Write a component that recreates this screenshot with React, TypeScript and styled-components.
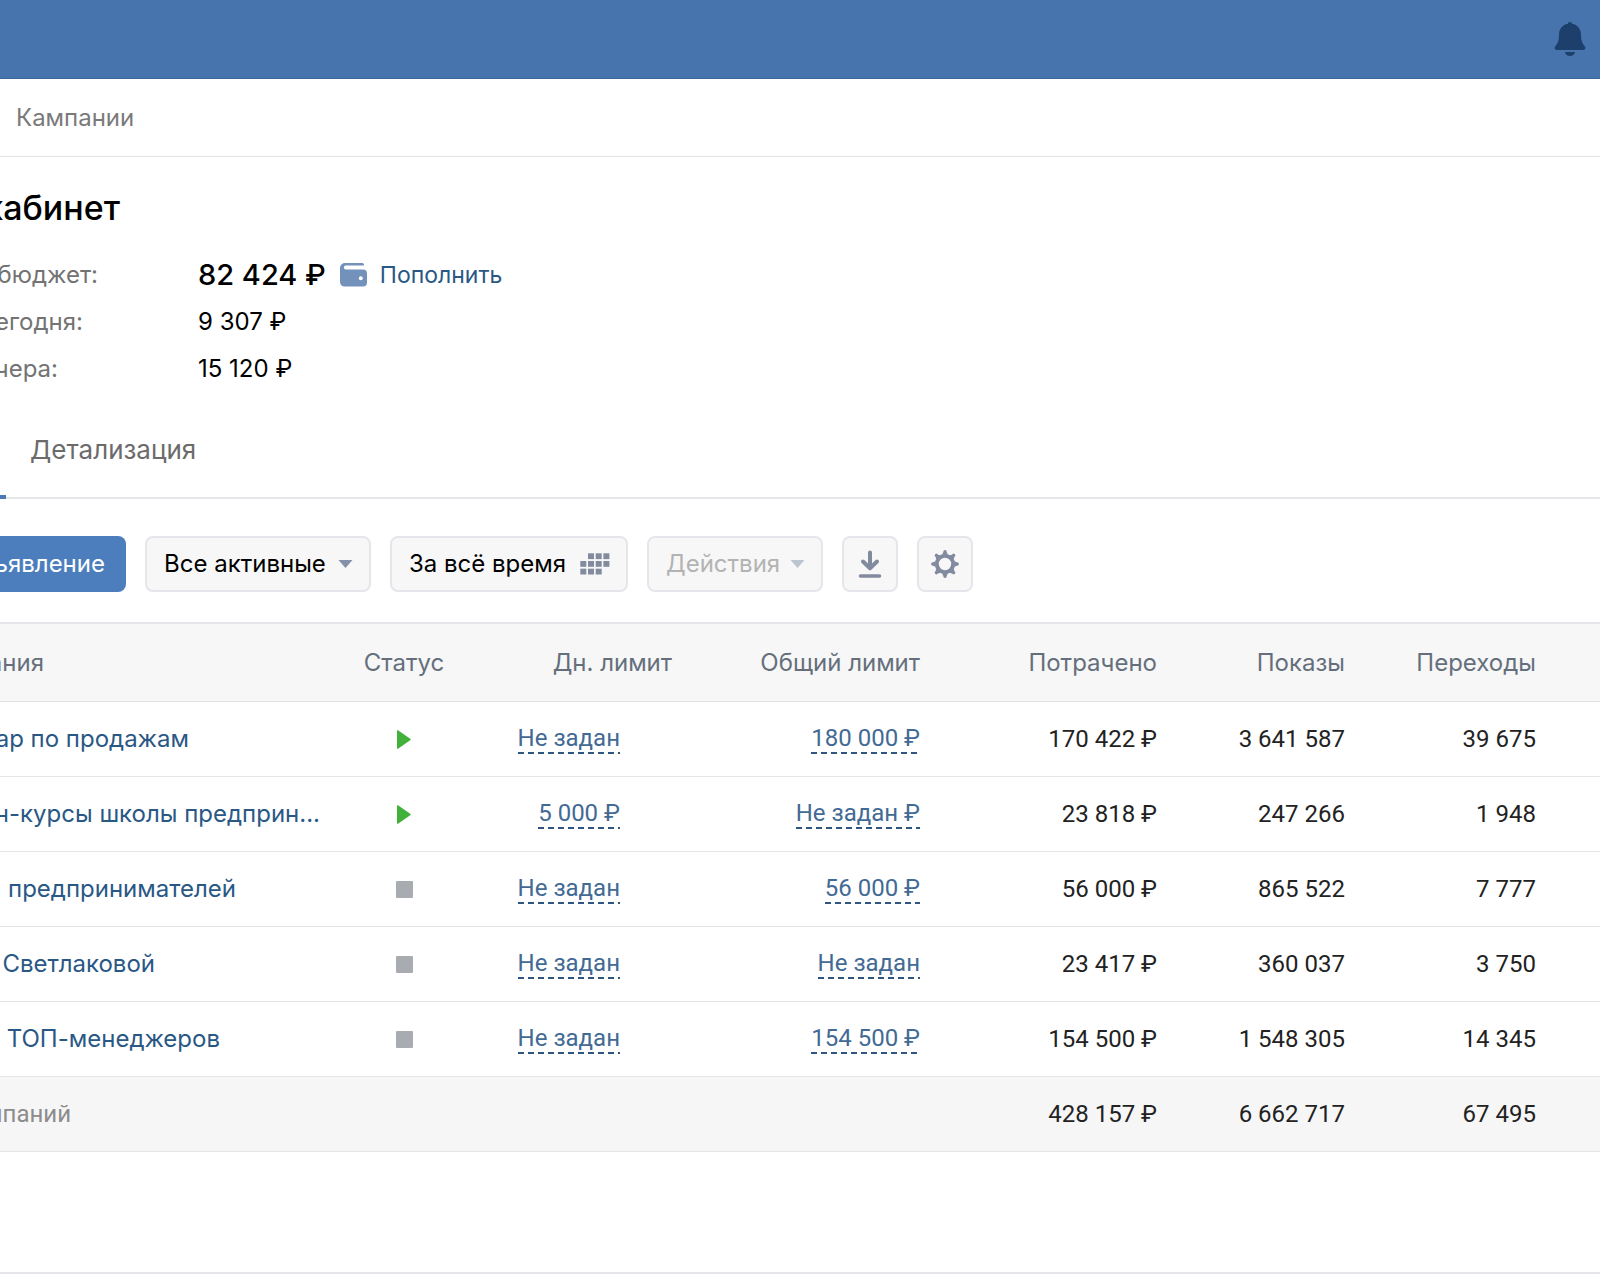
import React from "react";
import styled, { createGlobalStyle, css } from "styled-components";

const GlobalStyle = createGlobalStyle`
  *, *::before, *::after { box-sizing: border-box; }
  body {
    margin: 0;
    background: #fff;
    color: #000;
    font-family: Inter, "Liberation Sans", sans-serif;
    font-size: 24px;
    line-height: 28px;
    overflow-x: hidden;
  }
  button, select { font: inherit; }
`;

const Page = styled.div`
  display: flex;
  flex-direction: column;
  width: 100%;
  overflow: hidden;
`;

const TopBar = styled.header`
  display: flex;
  align-items: center;
  justify-content: flex-end;
  height: 79px;
  padding-right: 14px;
  background: #4774ad;
  border-bottom: 1px solid #3d679c;
`;

const BellButton = styled.button`
  display: flex;
  padding: 0;
  border: 0;
  background: none;
  color: #1d3f6c;
`;

const Nav = styled.nav`
  display: flex;
  align-items: center;
  height: 78px;
  padding-left: 16px;
  border-bottom: 1px solid #e1e2e5;
`;

const NavLink = styled.a`
  color: #7a7a7a;
  text-decoration: none;
`;

const Summary = styled.section`
  display: flex;
  flex-direction: column;
  padding-top: 30px;
`;

const Clipped = styled.span<{ $width: number }>`
  display: flex;
  justify-content: flex-end;
  width: ${(p) => p.$width}px;
  white-space: nowrap;
`;

const Title = styled.h1`
  margin: 0;
  font-size: 34px;
  line-height: 42px;
  font-weight: 500;
`;

const Facts = styled.dl`
  display: grid;
  grid-template-columns: 198px 1fr;
  grid-auto-rows: 47px;
  align-items: center;
  margin: 22px 0 0;
`;

const FactName = styled.dt`
  color: #737373;
`;

const FactValue = styled.dd`
  display: flex;
  align-items: center;
  gap: 14px;
  margin: 0;
`;

const Balance = styled.strong`
  font-size: 29px;
  font-weight: 500;
`;

const TopUp = styled.a`
  display: flex;
  align-items: center;
  gap: 13px;
  color: #2a5885;
  font-size: 23px;
  text-decoration: none;
`;

const Tabs = styled.nav`
  display: flex;
  height: 100px;
  margin-top: 7px;
  border-bottom: 2px solid #e4e6ea;
`;

const ActiveTab = styled.span`
  width: 6px;
  margin-bottom: -2px;
  border-bottom: 4px solid #4a7ab5;
`;

const Tab = styled.a`
  padding: 37px 24px 0;
  font-size: 26px;
  color: #6b6b6b;
  text-decoration: none;
`;

const Toolbar = styled.div`
  display: flex;
  align-items: center;
  gap: 19px;
  padding: 37px 0 30px;
`;

const control = css`
  height: 56px;
  border: 2px solid #e4e6eb;
  border-radius: 8px;
  background: #f7f7f7;
  color: #000;
`;

const PrimaryButton = styled.button`
  height: 56px;
  padding: 0 21px 0 0;
  border: 0;
  border-radius: 0 8px 8px 0;
  background: #4c7ebd;
  color: #fff;
`;

const SelectBox = styled.label`
  display: grid;
  align-items: center;

  > * { grid-area: 1 / 1; }
  > svg {
    justify-self: end;
    margin-right: 18px;
    pointer-events: none;
  }
`;

const Select = styled.select<{ $width: number }>`
  ${control}
  width: ${(p) => p.$width}px;
  padding: 0 0 0 17px;
  appearance: none;

  &:disabled { color: #b3b3b3; opacity: 1; }
`;

const PeriodButton = styled.button`
  ${control}
  display: flex;
  align-items: center;
  justify-content: space-between;
  width: 238px;
  padding: 0 16px 0 17px;
`;

const IconButton = styled.button`
  ${control}
  display: grid;
  place-items: center;
  width: 56px;
  padding: 0;
  color: #828a9f;
`;

const Table = styled.table`
  width: 100%;
  table-layout: fixed;
  border-collapse: separate;
  border-spacing: 0;
  border-top: 2px solid #e4e6ea;
`;

const Col = styled.col<{ $width?: number }>`
  width: ${(p) => (p.$width ? `${p.$width}px` : "auto")};
`;

type Align = "left" | "center" | "right";

const HeadCell = styled.th<{ $align?: Align }>`
  height: 78px;
  padding: 0;
  border-bottom: 1px solid #dfe1e5;
  background: #f7f7f8;
  color: #656f7c;
  font-weight: 400;
  text-align: ${(p) => p.$align || "right"};
  white-space: nowrap;
`;

const Cell = styled.td<{ $align?: Align; $inset?: number }>`
  height: 75px;
  padding: 0 ${(p) => p.$inset || 0}px 0 0;
  border-bottom: 1px solid #e4e5e8;
  color: #222;
  font-family: Roboto, "Liberation Sans", sans-serif;
  text-align: ${(p) => p.$align || "right"};
  white-space: nowrap;
`;

const NameCell = styled(Cell)`
  font-family: Inter, "Liberation Sans", sans-serif;
`;

const TotalCell = styled(Cell)`
  background: #f6f6f7;
`;

const TotalName = styled(TotalCell)`
  color: #8c8c8c;
`;

const CampaignLink = styled.a`
  color: #2a5885;
  text-decoration: none;
`;

const LimitButton = styled.button`
  padding: 0 0 2px;
  border: 0;
  background: repeating-linear-gradient(to right, #2f5680 0 6px, transparent 6px 10px) left bottom / 100% 2px no-repeat;
  color: #426a94;
  line-height: 28px;
`;

const StatusIcon = styled.svg`
  display: block;
  margin: 0 auto;
`;

const Footer = styled.footer`
  height: 122px;
  border-bottom: 2px solid #e4e6ea;
`;

const Arrow = ({ color }: { color: string }) => (
  <svg width="15" height="8" viewBox="0 0 15 8" aria-hidden="true">
    <path d="M0.5 0h14L7.5 8z" fill={color} />
  </svg>
);

const Bell = () => (
  <svg width="32" height="34" viewBox="0 0 32 34" fill="currentColor" aria-hidden="true">
    <path d="M16 0c1.3 0 2 .8 2.1 1.7C23.6 2.7 27 7 27 12.5c0 5.5.8 8.300 3.400 11.300C32.300 26 31.400 28 29 28H3c-2.400 0-3.300-2-1.400-4.200C4.200 20.800 5 18 5 12.500 5 7 8.400 2.700 13.900 1.700 14 .8 14.700 0 16 0z" />
    <path d="M11 30h10c-.5 2.400-2.300 4-5 4s-4.500-1.600-5-4z" />
  </svg>
);

const Wallet = () => (
  <svg width="27" height="24" viewBox="0 0 27 24" aria-hidden="true">
    <path
      fill="#7291bb"
      fillRule="evenodd"
      d="M5 0h17a1.800 1.800 0 0 1 1.800 2.600H5.800a1.900 1.900 0 0 0 0 3.900H23a4 4 0 0 1 4 4V19.500a4 4 0 0 1-4 4H4.500A4.500 4.500 0 0 1 0 19V5a5 5 0 0 1 5-5zm15.800 13.200a2 2 0 1 0 0 4 2 2 0 0 0 0-4z"
    />
  </svg>
);

const dots = [
  [1, 0], [2, 0], [3, 0],
  [0, 1], [1, 1], [2, 1], [3, 1],
  [0, 2], [1, 2], [2, 2],
];

const CalendarDots = () => (
  <svg width="30" height="22" viewBox="0 0 30 22" fill="#828c9e" aria-hidden="true">
    {dots.map(([x, y]) => (
      <rect key={`${x}-${y}`} x={x * 7.7 + 0.3} y={y * 7.7 + 0.3} width="6" height="5.8" />
    ))}
  </svg>
);

const Download = () => (
  <svg width="24" height="28" viewBox="0 0 24 28" fill="none" stroke="currentColor" strokeLinecap="round" strokeLinejoin="round" aria-hidden="true">
    <path d="M12 2.500v15M5 11.500l7 6.800 7-6.800" strokeWidth="4" />
    <path d="M2.500 26h19" strokeWidth="3.600" />
  </svg>
);

const teeth = [0, 45, 90, 135, 180, 225, 270, 315];

const Gear = () => (
  <svg width="28" height="28" viewBox="-14 -14 28 28" fill="currentColor" aria-hidden="true">
    <circle r="8.1" fill="none" stroke="currentColor" strokeWidth="3.8" />
    {teeth.map((angle) => (
      <path key={angle} transform={`rotate(${angle})`} d="M-4-9.200C-2.300-9.800-2-10.800-1.700-12.200a1.700 1.700 0 0 1 3.400 0C2-10.800 2.300-9.800 4-9.200z" />
    ))}
  </svg>
);

const Status = ({ active }: { active: boolean }) =>
  active ? (
    <StatusIcon width="14" height="19" viewBox="0 0 14 19" role="img" aria-label="Запущено">
      <path d="M1 .3 13.200 8.700a1 1 0 0 1 0 1.600L1 18.700a.6.600 0 0 1-1-.5V.8A.6.600 0 0 1 1 .3z" fill="#42b13c" />
    </StatusIcon>
  ) : (
    <StatusIcon width="17" height="17" viewBox="0 0 17 17" role="img" aria-label="Остановлено">
      <rect width="17" height="17" rx="1" fill="#a8abb0" />
    </StatusIcon>
  );

const campaigns = [
  { name: "ар по продажам", end: 189, active: true, daily: "Не задан", total: "180 000 ₽", spent: "170 422 ₽", shows: "3 641 587", clicks: "39 675" },
  { name: "н-курсы школы предприн...", end: 320, active: true, daily: "5 000 ₽", total: "Не задан ₽", spent: "23 818 ₽", shows: "247 266", clicks: "1 948" },
  { name: "а предпринимателей", end: 236, active: false, daily: "Не задан", total: "56 000 ₽", spent: "56 000 ₽", shows: "865 522", clicks: "7 777" },
  { name: "Светлаковой", end: 155, active: false, daily: "Не задан", total: "Не задан", spent: "23 417 ₽", shows: "360 037", clicks: "3 750" },
  { name: "а ТОП-менеджеров", end: 220, active: false, daily: "Не задан", total: "154 500 ₽", spent: "154 500 ₽", shows: "1 548 305", clicks: "14 345" },
];

export default function App() {
  return (
    <Page>
      <GlobalStyle />
      <TopBar>
        <BellButton type="button" aria-label="Уведомления">
          <Bell />
        </BellButton>
      </TopBar>
      <Nav>
        <NavLink href="#campaigns">Кампании</NavLink>
      </Nav>
      <main>
        <Summary>
          <Title>
            <Clipped $width={120}>кабинет</Clipped>
          </Title>
          <Facts>
            <FactName><Clipped $width={98}>бюджет:</Clipped></FactName>
            <FactValue>
              <Balance>82 424 ₽</Balance>
              <TopUp href="#topup">
                <Wallet />
                Пополнить
              </TopUp>
            </FactValue>
            <FactName><Clipped $width={83}>егодня:</Clipped></FactName>
            <FactValue>9 307 ₽</FactValue>
            <FactName><Clipped $width={58}>чера:</Clipped></FactName>
            <FactValue>15 120 ₽</FactValue>
          </Facts>
        </Summary>
        <Tabs>
          <ActiveTab />
          <Tab href="#details">Детализация</Tab>
        </Tabs>
        <Toolbar>
          <PrimaryButton type="button">
            <Clipped $width={105}>ъявление</Clipped>
          </PrimaryButton>
          <SelectBox>
            <Select $width={226} aria-label="Фильтр">
              <option>Все активные</option>
            </Select>
            <Arrow color="#8491a8" />
          </SelectBox>
          <PeriodButton type="button">
            За всё время
            <CalendarDots />
          </PeriodButton>
          <SelectBox>
            <Select $width={176} aria-label="Действия" disabled>
              <option>Действия</option>
            </Select>
            <Arrow color="#bcc4cf" />
          </SelectBox>
          <IconButton type="button" aria-label="Скачать"><Download /></IconButton>
          <IconButton type="button" aria-label="Настройки"><Gear /></IconButton>
        </Toolbar>
        <Table>
          <colgroup>
            <Col $width={340} />
            <Col $width={128} />
            <Col $width={204} />
            <Col $width={248} />
            <Col $width={237} />
            <Col $width={188} />
            <Col $width={191} />
            <Col />
          </colgroup>
          <thead>
            <tr>
              <HeadCell $align="left"><Clipped $width={44}>ания</Clipped></HeadCell>
              <HeadCell $align="center">Статус</HeadCell>
              <HeadCell>Дн. лимит</HeadCell>
              <HeadCell>Общий лимит</HeadCell>
              <HeadCell>Потрачено</HeadCell>
              <HeadCell>Показы</HeadCell>
              <HeadCell>Переходы</HeadCell>
              <HeadCell />
            </tr>
          </thead>
          <tbody>
            {campaigns.map((c) => (
              <tr key={c.name}>
                <NameCell $align="left">
                  <CampaignLink href="#campaign"><Clipped $width={c.end}>{c.name}</Clipped></CampaignLink>
                </NameCell>
                <Cell $align="center"><Status active={c.active} /></Cell>
                <Cell $inset={52}><LimitButton type="button">{c.daily}</LimitButton></Cell>
                <Cell><LimitButton type="button">{c.total}</LimitButton></Cell>
                <Cell>{c.spent}</Cell>
                <Cell>{c.shows}</Cell>
                <Cell>{c.clicks}</Cell>
                <Cell />
              </tr>
            ))}
          </tbody>
          <tfoot>
            <tr>
              <TotalName $align="left" colSpan={4}><Clipped $width={71}>мпаний</Clipped></TotalName>
              <TotalCell>428 157 ₽</TotalCell>
              <TotalCell>6 662 717</TotalCell>
              <TotalCell>67 495</TotalCell>
              <TotalCell />
            </tr>
          </tfoot>
        </Table>
      </main>
      <Footer />
    </Page>
  );
}
